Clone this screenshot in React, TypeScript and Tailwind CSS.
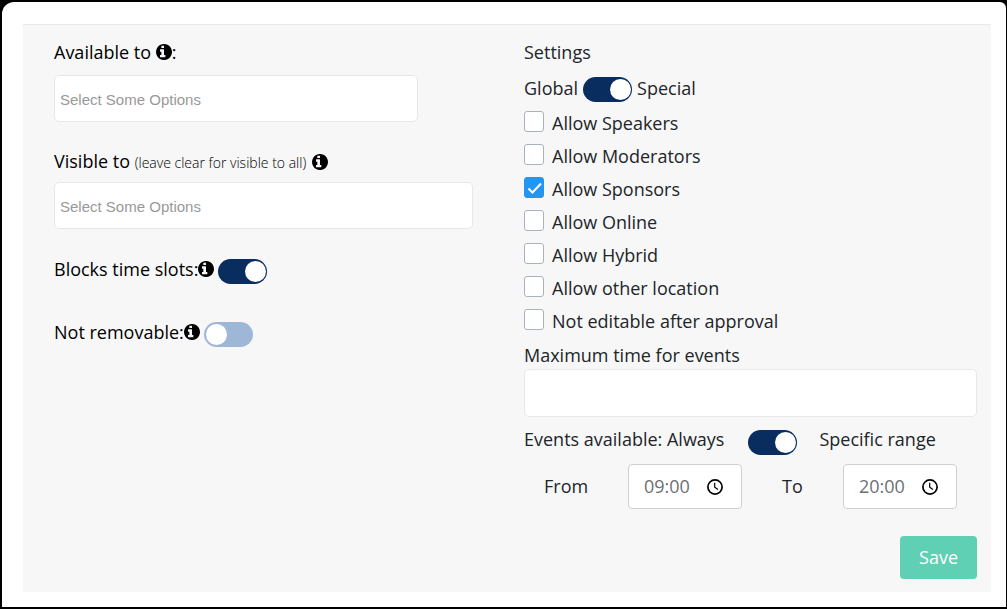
import { useState } from "react"
import clsx from "clsx"

interface ToggleProps {
  label: string
  defaultChecked?: boolean
  className?: string
}

function Toggle({ label, defaultChecked = false, className }: ToggleProps) {
  const [on, setOn] = useState(defaultChecked)

  return (
    <button
      type="button"
      role="switch"
      aria-checked={on}
      aria-label={label}
      onClick={() => setOn(!on)}
      className={clsx(
        "flex h-[25px] w-[49px] shrink-0 items-center rounded-full pr-px pl-[2px]",
        on ? "justify-end bg-[#082d5e]" : "justify-start bg-[#9fb7d7]",
        className,
      )}
    >
      <span className="size-[21px] rounded-full bg-white" />
    </button>
  )
}

function Info() {
  return (
    <svg viewBox="128 128 1536 1536" className="mb-px size-4 shrink-0 fill-black">
      <path d="M1024 1376v-160q0-14-9-23t-23-9h-96v-512q0-14-9-23t-23-9h-320q-14 0-23 9t-9 23v160q0 14 9 23t23 9h96v320h-96q-14 0-23 9t-9 23v160q0 14 9 23t23 9h448q14 0 23-9t9-23zm-128-896v-160q0-14-9-23t-23-9h-192q-14 0-23 9t-9 23v160q0 14 9 23t23 9h192q14 0 23-9t9-23zm768 416q0 209-103 385.5t-279.5 279.5-385.5 103-385.5-103-279.5-279.5-103-385.5 103-385.5 279.5-279.5 385.5-103 385.5 103 279.5 279.5 103 385.5z" />
    </svg>
  )
}

function OptionCheckbox({ label, defaultChecked }: { label: string; defaultChecked?: boolean }) {
  return (
    <label className="flex h-[33px] items-center gap-2">
      <span className="mb-[5px] grid h-[21px] w-5 shrink-0">
        <input
          type="checkbox"
          defaultChecked={defaultChecked}
          className="peer col-start-1 row-start-1 h-[21px] w-5 appearance-none rounded-[3px] border border-[#a9b3bf] bg-white checked:border-[#2196f3] checked:bg-[#2196f3]"
        />
        <svg
          viewBox="0 0 20 20"
          className="pointer-events-none col-start-1 row-start-1 hidden size-5 fill-none stroke-white stroke-2 peer-checked:block"
        >
          <path d="M4.5 11.5 8.5 15.5 17 6.5" />
        </svg>
      </span>
      {label}
    </label>
  )
}

function TimeField({ id, value }: { id: string; value: string }) {
  return (
    <div className="flex h-[45px] w-[114px] items-center rounded-[4px] border border-[#ced0d3] bg-white px-[15px]">
      <input id={id} type="text" defaultValue={value} className="w-[63px] bg-transparent text-[#6c7075] outline-none" />
      <svg viewBox="0 0 16 16" className="size-4 shrink-0 fill-none stroke-black">
        <circle cx="8" cy="8" r="7.1" strokeWidth="1.7" />
        <path d="M7.7 3.8V8.2L11 10.6" strokeWidth="1.2" />
      </svg>
    </div>
  )
}

const options = [
  { label: "Allow Speakers" },
  { label: "Allow Moderators" },
  { label: "Allow Sponsors", checked: true },
  { label: "Allow Online" },
  { label: "Allow Hybrid" },
  { label: "Allow other location" },
  { label: "Not editable after approval" },
]

const chosenInput =
  "block h-[47px] w-full rounded-[5px] border border-[#e8e8e8] bg-white px-[5px] pt-[2px] font-['Liberation_Sans',Arial,sans-serif] text-[15px] outline-none placeholder:text-[#999999]"

export default function App() {
  return (
    <div className="min-h-screen bg-black pt-[2px] pr-px pb-[2px] pl-[2px] font-['Open_Sans',sans-serif] text-[18px] leading-[27px] text-[#212529]">
      <div className="min-h-[605px] rounded-tl-[12px] rounded-tr-[6px] bg-white pt-[22px] pr-[15px] pb-[15px] pl-[21px]">
        <form
          onSubmit={(e) => e.preventDefault()}
          className="border-t border-[#eaeaea] bg-[#f7f7f7] pt-[14px] pr-[14px] pb-[13px] pl-[31px]"
        >
          <div className="grid grid-cols-[419fr_453fr] gap-x-[51px]">
            <div className="text-black">
              <label htmlFor="available" className="flex items-center">
                Available to&nbsp;
                <Info />:
              </label>
              <input
                id="available"
                type="text"
                placeholder="Select Some Options"
                className={clsx(chosenInput, "mt-[9px] max-w-[364px]")}
              />

              <label htmlFor="visible" className="mt-[26px] flex items-center">
                <span>
                  Visible to <span className="text-[14px] font-light">(leave clear for visible to all)</span>
                </span>
                <span className="ml-[6px]">
                  <Info />
                </span>
              </label>
              <input
                id="visible"
                type="text"
                placeholder="Select Some Options"
                className={clsx(chosenInput, "mt-[6px]")}
              />

              <div className="mt-[26px] flex items-center">
                Blocks time slots:
                <Info />
                <Toggle label="Blocks time slots" defaultChecked className="mt-1 ml-1" />
              </div>
              <div className="mt-[34px] flex items-center">
                Not removable:
                <Info />
                <Toggle label="Not removable" className="mt-1 ml-1" />
              </div>
            </div>

            <div>
              <h2>Settings</h2>
              <div className="mt-[9px] flex h-[32px] items-start">
                Global
                <Toggle label="Global or special" defaultChecked className="mt-[2px] mr-[5px] ml-[5px]" />
                Special
              </div>
              {options.map((o) => (
                <OptionCheckbox key={o.label} label={o.label} defaultChecked={o.checked} />
              ))}

              <label htmlFor="max-time" className="mt-1 block">
                Maximum time for events
              </label>
              <input
                id="max-time"
                type="text"
                className="block h-12 w-full rounded-[5px] border border-[#e8e8e8] bg-white px-3 outline-none"
              />

              <div className="mt-[9px] flex items-start">
                <span>Events available: Always</span>
                <Toggle label="Always or specific range" defaultChecked className="mt-1 mr-[22px] ml-6" />
                <span>Specific range</span>
              </div>

              <div className="mt-[9px] flex items-center justify-between px-5">
                <label htmlFor="from" className="w-[84px]">
                  From
                </label>
                <TimeField id="from" value="09:00" />
                <label htmlFor="to" className="ml-10 w-[61px]">
                  To
                </label>
                <TimeField id="to" value="20:00" />
              </div>
            </div>
          </div>

          <div className="mt-[27px] flex justify-end">
            <button type="submit" className="h-[43px] rounded-[4px] bg-[#5fd0b3] px-[19px] text-white">
              Save
            </button>
          </div>
        </form>
      </div>
    </div>
  )
}
